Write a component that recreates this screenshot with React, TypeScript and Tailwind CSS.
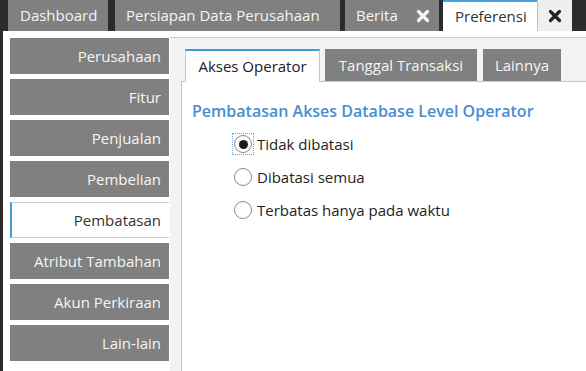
import React from 'react';

const font = { fontFamily: '"Open Sans", "Noto Sans", sans-serif' };

function CloseIcon({ className }: { className?: string }) {
  return (
    <svg viewBox="0 0 14 14" width="14" height="14" className={className}>
      <path d="M2.5 2.5 L11.5 11.5 M11.5 2.5 L2.5 11.5" stroke="currentColor" strokeWidth="3.2" strokeLinecap="round" />
    </svg>
  );
}

const menu = [
  'Perusahaan',
  'Fitur',
  'Penjualan',
  'Pembelian',
  'Pembatasan',
  'Atribut Tambahan',
  'Akun Perkiraan',
  'Lain-lain',
];

const options = ['Tidak dibatasi', 'Dibatasi semua', 'Terbatas hanya pada waktu'];

function Radio({ checked, focused }: { checked?: boolean; focused?: boolean }) {
  return (
    <span
      className={`flex items-center justify-center w-[22px] h-[22px] ${
        focused ? 'border border-dotted border-[#7aa7d6]' : 'border border-transparent'
      }`}
    >
      <span className="w-[18px] h-[18px] rounded-full border-[1.5px] border-[#8a8a8a] bg-white flex items-center justify-center">
        {checked && <span className="w-[9px] h-[9px] rounded-full bg-[#1a1a1a]" />}
      </span>
    </span>
  );
}

export default function App() {
  return (
    <div className="w-[586px] h-[371px] bg-[#2b2b2b] overflow-hidden flex flex-col" style={font}>
      {/* Top tabs */}
      <div className="h-[31px] flex shrink-0 text-[15px]">
        <div className="ml-[8px] w-[100px] bg-[#808080] text-[#f5f5f5] flex items-center pl-[12px]">Dashboard</div>
        <div className="ml-[7px] w-[225px] bg-[#808080] text-[#f5f5f5] flex items-center pl-[11px]">
          Persiapan Data Perusahaan
        </div>
        <div className="ml-[5px] w-[94px] bg-[#808080] text-[#f5f5f5] flex items-center justify-between pl-[11px] pr-[9px]">
          <span>Berita</span>
          <CloseIcon />
        </div>
        <div className="ml-[4px] w-[94px] bg-white border-t-2 border-[#43a3dc] text-[#333] flex items-center pl-[12px]">
          Preferensi
        </div>
        <div className="w-[35px] bg-[#efefef] border-l border-[#bdbdbd] text-[#222] flex items-center justify-center">
          <CloseIcon />
        </div>
      </div>

      {/* Content */}
      <div className="flex-1 ml-[3px] bg-white flex pt-[6px] pl-[7px] min-h-0">
        <div className="w-[160px] shrink-0 pt-[1px] flex flex-col gap-[5px]">
          {menu.map((m) =>
            m === 'Pembatasan' ? (
              <div
                key={m}
                className="h-[36px] w-[159px] bg-white border-y border-[#c8c8c8] border-l-2 border-l-[#3d9ad6] text-[#333] text-[15px] flex items-center justify-end pr-[8px]"
              >
                {m}
              </div>
            ) : (
              <div
                key={m}
                className="h-[36px] w-[159px] bg-[#808080] text-[#f5f5f5] text-[15px] flex items-center justify-end pr-[8px]"
              >
                {m}
              </div>
            )
          )}
        </div>

        <div className="flex-1 bg-[#f3f3f3] border-t border-[#cbcbcb] pl-[11px] pt-[11px] flex flex-col min-w-0">
          <div className="flex ml-[4px] text-[15px] h-[32px] shrink-0 relative z-10">
            <div className="w-[135px] bg-white border-t-2 border-[#3d9ad6] border-x border-x-[#c5c5c5] text-[#222] flex items-center justify-center h-[33px]">
              Akses Operator
            </div>
            <div className="ml-[5px] w-[152px] bg-[#808080] text-[#f5f5f5] flex items-center justify-center">
              Tanggal Transaksi
            </div>
            <div className="ml-[6px] w-[78px] bg-[#808080] text-[#f5f5f5] flex items-center justify-center">
              Lainnya
            </div>
          </div>
          <div className="flex-1 bg-white border-t border-l border-[#c5c5c5] pl-[10px] pt-[18px]">
            <div className="text-[16px] font-semibold text-[#4a8dcf] leading-[22px]">
              Pembatasan Akses Database Level Operator
            </div>
            <div className="mt-[11px] ml-[40px] flex flex-col gap-[11px]">
              {options.map((o, i) => (
                <label key={o} className="flex items-center gap-[3px] text-[15px] text-[#1e1e1e] leading-[22px]">
                  <Radio checked={i === 0} focused={i === 0} />
                  <span>{o}</span>
                </label>
              ))}
            </div>
          </div>
        </div>
      </div>
    </div>
  );
}
